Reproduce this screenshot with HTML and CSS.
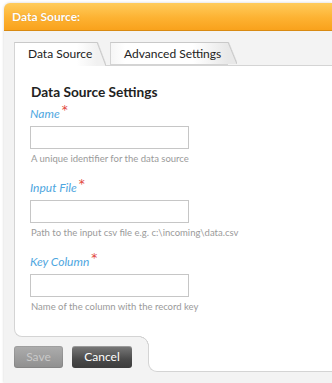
FILE: index.html
```html
<!DOCTYPE html>
<html>
    <head>
        <meta charset="UTF-8">
        <title>Data Source</title>
        <link rel="stylesheet" href="styles.css">
    </head>

    <body>
        <div class="window">
            <div class="window-title">Data Source:</div>

            <div class="window-content">
                <div class="tabs">
                    <div class="tab active">Data Source</div>
                    <div class="tab">Advanced Settings</div>
                </div>

                <div class="panel">
                    <h2>Data Source Settings</h2>

                    <div class="field">
                        <label>Name<span class="required">*</span></label>
                        <input type="text">
                        <div class="hint">A unique identifier for the data source</div>
                    </div>

                    <div class="field">
                        <label>Input File<span class="required">*</span></label>
                        <input type="text">
                        <div class="hint">Path to the input csv file e.g. c:\incoming\data.csv</div>
                    </div>

                    <div class="field">
                        <label>Key Column<span class="required">*</span></label>
                        <input type="text">
                        <div class="hint">Name of the column with the record key</div>
                    </div>
                </div>

                <div class="panel-foot">
                    <div class="actions">
                        <button class="btn save" disabled>Save</button>
                        <button class="btn cancel">Cancel</button>
                    </div>
                    <div class="tail"></div>
                </div>
            </div>
        </div>
    </body>
</html>
```

FILE: styles.css
```css
* {
    box-sizing: border-box;
}

body {
    margin: 0;
    overflow: hidden;
    background: #fff;
    font-family: 'Lato', 'Liberation Sans', sans-serif;
}

.window {
    margin: 3px 0 0 4px;
    min-height: 380px;
    background: #f3f3f3;
    border-radius: 6px 0 0 0;
    box-shadow: 0 0 3px rgba(0, 0, 0, .18);
}

.window-title {
    height: 28px;
    padding-left: 8px;
    line-height: 27px;
    font-size: 12px;
    font-weight: bold;
    color: #fff;
    text-shadow: 0 0 1px rgba(150, 80, 0, .4);
    background: linear-gradient(#ffcc5c, #fdb232 55%, #f9a21c);
    border-bottom: 1px solid #d88a12;
    border-radius: 6px 0 0 0;
}

.window-content {
    padding: 11px 0 0 10px;
}

/* tabs */
.tabs {
    display: flex;
    align-items: flex-start;
    height: 24px;
    margin-bottom: -1px;
    position: relative;
    z-index: 1;
}

.tab {
    position: relative;
    height: 23px;
    padding-left: 13px;
    line-height: 22px;
    font-size: 12px;
    color: #222;
    background: linear-gradient(to right, #f6f6f6, #fff 12%, #fff 70%, #e8e8e8);
    border-top: 1px solid #c9c9c9;
    border-left: 1px solid #d4d4d4;
}

.tab::after {
    content: '';
    position: absolute;
    top: -1px;
    right: -9px;
    width: 9px;
    height: calc(100% + 1px);
    background: linear-gradient(to top right, #e8e8e8 44%, #c9c9c9 50%, transparent 58%);
}

.tab.active {
    width: 83px;
    height: 24px;
    margin-right: 13px;
    background: linear-gradient(to right, #fff 75%, #f1f1f1);
}

.tab.active::after {
    background: linear-gradient(to top right, #f1f1f1 44%, #c9c9c9 50%, transparent 58%);
}

.tab:not(.active) {
    width: 118px;
    border-bottom: 1px solid #d4d4d4;
}

/* panel */
.panel {
    background: #fff;
    border: 1px solid #d4d4d4;
    border-right: none;
    border-bottom-left-radius: 8px;
    padding: 18px 0 23px 15px;
}

.panel h2 {
    margin: 0 0 7px 1px;
    font-size: 13.7px;
    line-height: 16px;
    font-weight: bold;
    color: #222;
}

.field {
    margin-bottom: 16px;
}

.field:last-child {
    margin-bottom: 0;
}

.field label {
    display: block;
    height: 14px;
    line-height: 14px;
    font-size: 12px;
    font-style: italic;
    color: #4ea6e0;
}

.required {
    position: relative;
    top: -4px;
    margin-left: 2px;
    font-family: 'DejaVu Sans', sans-serif;
    font-size: 12px;
    font-style: normal;
    color: #e2463c;
}

.field input {
    display: block;
    width: 159px;
    height: 23px;
    margin-top: 5px;
    border: 1px solid #c6c6c6;
    background: #fff;
}

.hint {
    margin-top: 4px;
    padding-left: 1px;
    line-height: 12px;
    font-size: 9.5px;
    color: #9a9a9a;
}

/* footer */
.panel-foot {
    display: flex;
}

.actions {
    display: flex;
    gap: 9px;
    width: 134px;
    padding-top: 9px;
}

.btn {
    height: 22px;
    padding: 0;
    border: none;
    border-radius: 3px;
    font-family: inherit;
    font-size: 12px;
    line-height: 22px;
}

.btn.save {
    width: 49px;
    color: #c9c9c9;
    background: linear-gradient(#adadad, #8f8f8f);
    box-shadow: inset 0 0 0 1px rgba(0, 0, 0, .08);
}

.btn.cancel {
    width: 60px;
    color: #fff;
    background: linear-gradient(#7a7a7a, #4a4a4a 60%, #3c3c3c);
    box-shadow: inset 0 1px 0 rgba(255, 255, 255, .25);
    cursor: pointer;
}

.tail {
    flex: 1;
    position: relative;
    height: 36px;
    margin-top: -1px;
    background: #fff;
    border-left: 1px solid #d4d4d4;
    border-bottom: 1px solid #d4d4d4;
    border-bottom-left-radius: 9px;
}

/* inner corner where the panel turns down beside the buttons */
.tail::before {
    content: '';
    position: absolute;
    top: 0;
    left: -10px;
    width: 10px;
    height: 10px;
    background: radial-gradient(circle at 0 100%, #f3f3f3 8.6px, #d4d4d4 8.9px, #d4d4d4 9.7px, #fff 10px);
}
```
